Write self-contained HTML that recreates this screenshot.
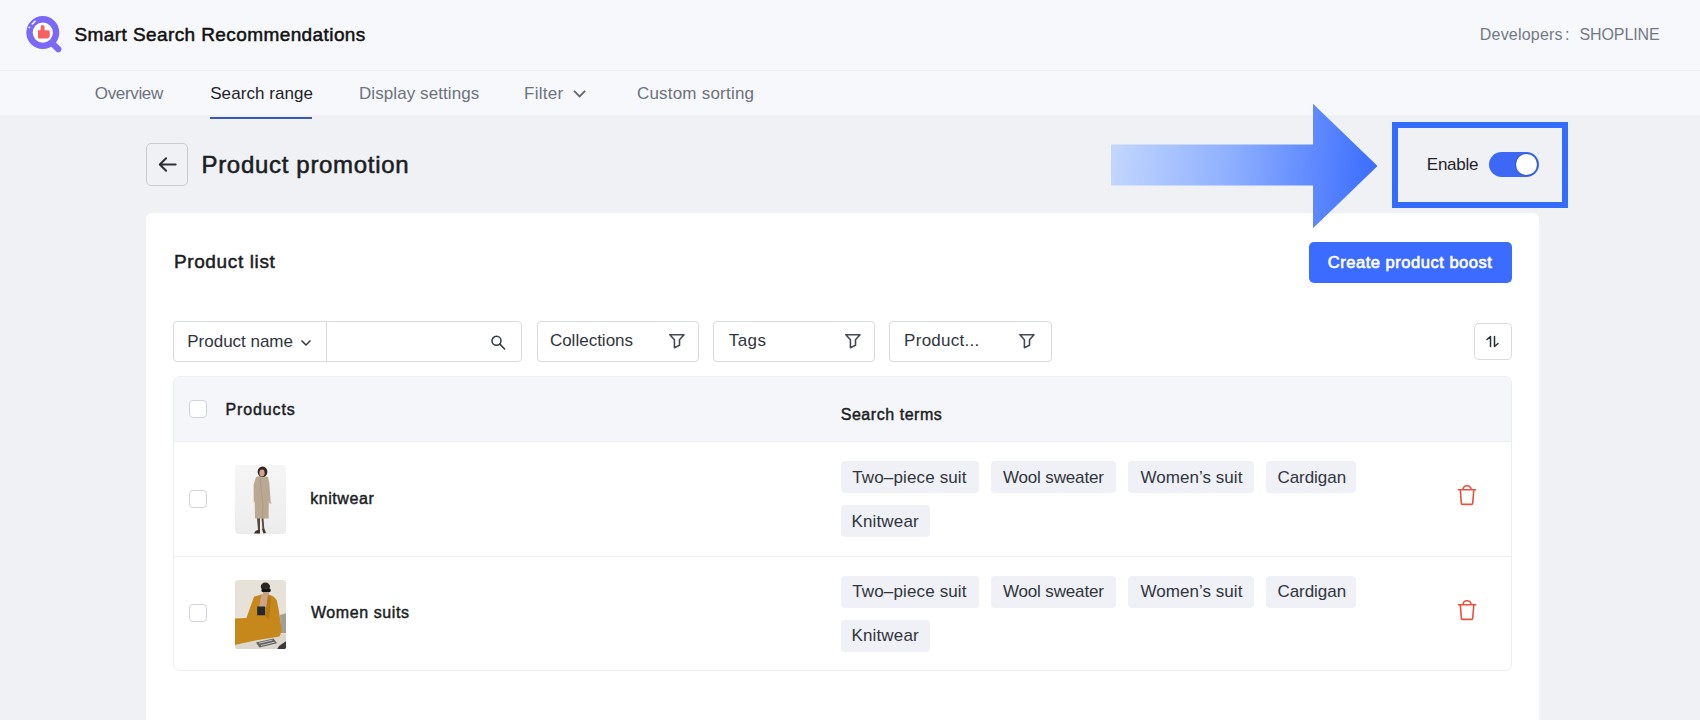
<!DOCTYPE html>
<html><head><meta charset="utf-8"><style>
html,body{margin:0;padding:0;width:1700px;height:720px;overflow:hidden;background:#f0f1f5;}
body{position:relative;font-family:"Liberation Sans",sans-serif;}
.t{position:absolute;line-height:1;white-space:nowrap;}
</style></head><body>
<div style="position:absolute;left:0;top:0;width:1700px;height:71px;background:#f7f8fb;border-bottom:1px solid #eeeef3;box-sizing:border-box"></div>
<div style="position:absolute;left:0;top:71px;width:1700px;height:44px;background:#f7f8fb"></div>
<svg style="position:absolute;left:0;top:0" width="70" height="60" viewBox="0 0 70 60">
<line x1="52" y1="43" x2="58.3" y2="49.3" stroke="#7a68f6" stroke-width="6.2" stroke-linecap="round"/>
<circle cx="42.8" cy="32.6" r="13.3" fill="#fff" stroke="#7a68f6" stroke-width="6.4"/>
<path d="M32.3 24 L35.1 21.2" stroke="#fff" stroke-width="1.5" stroke-linecap="round"/>
<circle cx="29.4" cy="27.4" r="0.9" fill="#fff"/>
<path d="M38 30.2 H40.6 V27.2 Q40.6 25.1 42.6 25.1 Q44.6 25.1 44.6 27.2 V30.2 H48.2 Q49.8 30.2 49.8 31.8 V35.6 Q49.8 38.4 47 38.4 H38 Z" fill="#f66262"/>
</svg>
<div class="t" id="title" style="top:25.00px;left:74.50px;font-size:19px;font-weight:400;color:#111;letter-spacing:0.407px;-webkit-text-stroke:0.5px #111;">Smart Search Recommendations</div>
<div class="t" id="dev1" style="top:27.00px;left:1479.80px;font-size:16px;font-weight:400;color:#737987;letter-spacing:0.200px;">Developers</div>
<div class="t" id="dev2" style="top:27.00px;left:1565.00px;font-size:16px;font-weight:400;color:#737987;letter-spacing:0.000px;">:</div>
<div class="t" id="dev3" style="top:27.00px;left:1579.40px;font-size:16px;font-weight:400;color:#737987;letter-spacing:-0.086px;">SHOPLINE</div>
<div class="t" id="nav1" style="top:85.00px;left:94.80px;font-size:17px;font-weight:400;color:#6c7280;letter-spacing:-0.343px;">Overview</div>
<div class="t" id="nav2" style="top:85.00px;left:210.20px;font-size:17px;font-weight:400;color:#1f2329;letter-spacing:0.073px;">Search range</div>
<div class="t" id="nav3" style="top:85.00px;left:359.00px;font-size:17px;font-weight:400;color:#6c7280;letter-spacing:0.080px;">Display settings</div>
<div class="t" id="nav4" style="top:85.00px;left:524.00px;font-size:17px;font-weight:400;color:#6c7280;letter-spacing:0.280px;">Filter</div>
<svg style="position:absolute;left:571px;top:87px" width="16" height="12" viewBox="0 0 16 12"><path d="M3.1 3.9 L8.6 9.4 L14.1 3.9" stroke="#636874" stroke-width="1.8" fill="none"/></svg>
<div class="t" id="nav5" style="top:85.00px;left:636.90px;font-size:17px;font-weight:400;color:#6c7280;letter-spacing:0.215px;">Custom sorting</div>
<div style="position:absolute;left:0;top:115px;width:1700px;height:605px;background:#f0f1f5"></div>
<div style="position:absolute;left:210px;top:117px;width:102px;height:2px;background:#3b57b8"></div>
<div style="position:absolute;left:146px;top:143px;width:42px;height:43px;box-sizing:border-box;border:1px solid #c8cbd2;border-radius:5px"></div>
<svg style="position:absolute;left:156px;top:154px" width="24" height="22" viewBox="0 0 24 22"><path d="M3.8 10.5 H19.6 M10.1 4.2 L3.8 10.5 L10.1 16.8" stroke="#2b2f36" stroke-width="2" fill="none" stroke-linecap="round" stroke-linejoin="round"/></svg>
<div class="t" id="pp" style="top:153.00px;left:201.50px;font-size:24px;font-weight:400;color:#1a1d23;letter-spacing:0.687px;-webkit-text-stroke:0.55px #1a1d23;">Product promotion</div>
<div style="position:absolute;left:146px;top:213px;width:1393px;height:520px;background:#fff;border-radius:6px"></div>
<svg style="position:absolute;left:1100px;top:95px" width="300" height="140" viewBox="0 0 300 140">
<defs><linearGradient id="ag" x1="10" y1="60" x2="278" y2="80" gradientUnits="userSpaceOnUse">
<stop offset="0" stop-color="#c3d7fd"/><stop offset="0.45" stop-color="#8eafff"/><stop offset="1" stop-color="#3a6cff"/></linearGradient></defs>
<path d="M11 49.6 H213 V8.8 L277.5 71 L213 133.2 V90.4 H11 Z" fill="url(#ag)"/>
</svg>
<div style="position:absolute;left:1392px;top:122px;width:176px;height:86px;box-sizing:border-box;border:6px solid #336dff"></div>
<div class="t" id="enable" style="top:156.00px;left:1426.80px;font-size:17px;font-weight:400;color:#1f2329;letter-spacing:-0.240px;">Enable</div>
<div style="position:absolute;left:1489px;top:152px;width:50px;height:25px;border-radius:13px;background:#3c68f5"></div>
<div style="position:absolute;left:1515.8px;top:153.9px;width:21.5px;height:21.5px;border-radius:50%;background:#fff;box-shadow:0 0 0 1px #3059d8"></div>
<div class="t" id="plist" style="top:252.00px;left:173.90px;font-size:19px;font-weight:400;color:#1a1d23;letter-spacing:0.636px;-webkit-text-stroke:0.5px #1a1d23;">Product list</div>
<div style="position:absolute;left:1309px;top:242px;width:203px;height:41px;border-radius:5px;background:#3c6cff"></div>
<div class="t" id="create" style="top:254.00px;left:1327.80px;font-size:16.5px;font-weight:400;color:#fff;letter-spacing:0.526px;-webkit-text-stroke:0.65px #fff;">Create product boost</div>
<div style="position:absolute;left:173px;top:321px;width:349px;height:41px;box-sizing:border-box;border:1px solid #d8dbe2;border-radius:4px"></div>
<div style="position:absolute;left:326px;top:322px;width:1px;height:39px;background:#d8dbe2"></div>
<div class="t" id="pname" style="top:333.00px;left:187.30px;font-size:17px;font-weight:400;color:#30353d;letter-spacing:-0.018px;">Product name</div>
<svg style="position:absolute;left:299px;top:337px" width="14" height="12" viewBox="0 0 14 12"><path d="M2.5 3.5 L7 8 L11.5 3.5" stroke="#2b2f36" stroke-width="1.4" fill="none"/></svg>
<svg style="position:absolute;left:488px;top:333px" width="20" height="20" viewBox="0 0 20 20"><circle cx="8.5" cy="7.8" r="4.5" stroke="#353a42" stroke-width="1.5" fill="none"/><path d="M11.8 11.1 L16.6 16" stroke="#353a42" stroke-width="1.6" stroke-linecap="round"/></svg>
<div style="position:absolute;left:536.5px;top:321px;width:162.0px;height:41px;box-sizing:border-box;border:1px solid #d8dbe2;border-radius:4px"></div>
<div class="t" id="coll" style="top:332.00px;left:549.90px;font-size:17px;font-weight:400;color:#30353d;letter-spacing:0.000px;">Collections</div>
<svg style="position:absolute;left:667.5px;top:332px" width="18" height="18" viewBox="0 0 18 18"><path d="M1.9 2.7 H16 L11.5 7.8 V13.3 L6.4 15.7 V7.8 Z" stroke="#444951" stroke-width="1.6" fill="none" stroke-linejoin="round"/></svg>
<div style="position:absolute;left:713px;top:321px;width:162px;height:41px;box-sizing:border-box;border:1px solid #d8dbe2;border-radius:4px"></div>
<div class="t" id="tags" style="top:332.00px;left:728.70px;font-size:17px;font-weight:400;color:#30353d;letter-spacing:0.467px;">Tags</div>
<svg style="position:absolute;left:843.5px;top:332px" width="18" height="18" viewBox="0 0 18 18"><path d="M1.9 2.7 H16 L11.5 7.8 V13.3 L6.4 15.7 V7.8 Z" stroke="#444951" stroke-width="1.6" fill="none" stroke-linejoin="round"/></svg>
<div style="position:absolute;left:889px;top:321px;width:162.5px;height:41px;box-sizing:border-box;border:1px solid #d8dbe2;border-radius:4px"></div>
<div class="t" id="prod" style="top:332.00px;left:904.10px;font-size:17px;font-weight:400;color:#30353d;letter-spacing:0.267px;">Product...</div>
<svg style="position:absolute;left:1018px;top:332px" width="18" height="18" viewBox="0 0 18 18"><path d="M1.9 2.7 H16 L11.5 7.8 V13.3 L6.4 15.7 V7.8 Z" stroke="#444951" stroke-width="1.6" fill="none" stroke-linejoin="round"/></svg>
<div style="position:absolute;left:1474px;top:323px;width:37.5px;height:36.5px;box-sizing:border-box;border:1px solid #d8dbe2;border-radius:5px"></div>
<svg style="position:absolute;left:1483px;top:332px" width="20" height="20" viewBox="0 0 20 20"><path d="M4 7.5 L7.5 4.5 V14.5 M11.5 4.5 V14.5 L15 11.5" stroke="#2b2f36" stroke-width="1.5" fill="none" stroke-linejoin="round" stroke-linecap="round"/></svg>
<div style="position:absolute;left:173px;top:376px;width:1338.5px;height:295px;box-sizing:border-box;border:1px solid #eceef3;border-radius:7px;overflow:hidden"><div style="position:absolute;left:0;top:0;width:100%;height:64px;background:#f5f6fa;border-bottom:1px solid #eceef3"></div><div style="position:absolute;left:0;top:179px;width:100%;height:1px;background:#eceef3"></div></div>
<div style="position:absolute;left:189px;top:399.5px;width:18px;height:18px;box-sizing:border-box;border:1.8px solid #cfd3de;border-radius:4px;background:#fff"></div>
<div class="t" id="thp" style="top:402.00px;left:225.60px;font-size:16px;font-weight:400;color:#1a1d23;letter-spacing:0.857px;-webkit-text-stroke:0.45px #1a1d23;">Products</div>
<div class="t" id="ths" style="top:407.00px;left:840.70px;font-size:16px;font-weight:400;color:#1a1d23;letter-spacing:0.545px;-webkit-text-stroke:0.45px #1a1d23;">Search terms</div>
<div style="position:absolute;left:189px;top:489.8px;width:18px;height:18px;box-sizing:border-box;border:1.8px solid #cfd3de;border-radius:4px;background:#fff"></div>
<svg style="position:absolute;left:234.5px;top:464.5px;border-radius:4px" width="51.5" height="69.5" viewBox="0 0 51.5 69.5">
<defs><linearGradient id="g1" x1="0" y1="0" x2="0" y2="1"><stop offset="0" stop-color="#f6f6f6"/><stop offset="1" stop-color="#ececec"/></linearGradient>
<clipPath id="c1"><rect width="51.5" height="69.5" rx="4"/></clipPath></defs>
<g clip-path="url(#c1)"><rect width="51.5" height="69.5" fill="url(#g1)"/>
<path d="M20.5 66 L19 68.5 L25 68.5 L25 64 Z M27 64 L28.5 68.5 L31 68 L29 63 Z" fill="#3d3028"/>
<path d="M22 53 L23 65 L25 65 L25 53 Z M26.5 53 L27.5 64.5 L29.3 64.5 L28.5 53 Z" fill="#5a463a"/>
<path d="M21 12 Q27 10 33 12 L34.3 18 L35.6 36 L36.5 38.5 L34.5 38.5 L33.8 35 L33.6 53.6 L20 53.6 L19.7 36 L18.8 38 L18.6 20 Z" fill="#bba893"/>
<path d="M25 14 L28 40 L27 53" stroke="#a8947f" stroke-width="0.8" fill="none"/>
<ellipse cx="27.5" cy="6.8" rx="4.9" ry="5.3" fill="#34261f"/>
<ellipse cx="27" cy="8" rx="2.6" ry="3.4" fill="#cfa68c"/>
</g></svg>
<div class="t" id="knit" style="top:491.00px;left:310.20px;font-size:16px;font-weight:400;color:#1a1d23;letter-spacing:0.571px;-webkit-text-stroke:0.45px #1a1d23;">knitwear</div>
<div style="position:absolute;left:841px;top:461px;width:137.5px;height:32px;background:#eff1f6;border-radius:4px"></div>
<div class="t" id="tag10" style="top:469.00px;left:852.25px;font-size:17px;font-weight:400;color:#30353d;letter-spacing:0.138px;">Two–piece suit</div>
<div style="position:absolute;left:990.6px;top:461px;width:125.39999999999998px;height:32px;background:#eff1f6;border-radius:4px"></div>
<div class="t" id="tag11" style="top:469.00px;left:1002.90px;font-size:17px;font-weight:400;color:#30353d;letter-spacing:-0.145px;">Wool sweater</div>
<div style="position:absolute;left:1128.2px;top:461px;width:125.59999999999991px;height:32px;background:#eff1f6;border-radius:4px"></div>
<div class="t" id="tag12" style="top:469.00px;left:1140.40px;font-size:17px;font-weight:400;color:#30353d;letter-spacing:0.055px;">Women’s suit</div>
<div style="position:absolute;left:1266.1px;top:461px;width:90.40000000000009px;height:32px;background:#eff1f6;border-radius:4px"></div>
<div class="t" id="tag13" style="top:469.00px;left:1277.40px;font-size:17px;font-weight:400;color:#30353d;letter-spacing:-0.029px;">Cardigan</div>
<div style="position:absolute;left:841px;top:505px;width:89px;height:32px;background:#eff1f6;border-radius:4px"></div>
<div class="t" id="tag14" style="top:513.00px;left:851.50px;font-size:17px;font-weight:400;color:#30353d;letter-spacing:0.143px;">Knitwear</div>
<svg style="position:absolute;left:1454.5px;top:483.5px" width="24" height="26" viewBox="0 0 24 26"><path d="M2.8 5.7 H21.2 M8 5.7 Q8.2 1.7 12 1.7 Q15.8 1.7 16.2 5.7 M5.3 5.7 L6.4 19.4 Q6.5 20.4 7.5 20.4 H16.6 Q17.6 20.4 17.7 19.4 L18.8 5.7" stroke="#e5533d" stroke-width="1.6" fill="none" stroke-linejoin="round"/></svg>
<div style="position:absolute;left:189px;top:604.2px;width:18px;height:18px;box-sizing:border-box;border:1.8px solid #cfd3de;border-radius:4px;background:#fff"></div>
<svg style="position:absolute;left:234.5px;top:579.5px" width="51.5" height="69.5" viewBox="0 0 51.5 69.5">
<defs><clipPath id="c2"><rect width="51.5" height="69.5" rx="4"/></clipPath></defs>
<g clip-path="url(#c2)"><rect width="51.5" height="69.5" fill="#e6e2da"/>
<rect x="0" y="54" width="51.5" height="15.5" fill="#ddd7ce"/>
<path d="M45 35 L51.5 33 L51.5 53 L46 53 Z" fill="#a29d95"/>
<path d="M44 66 L51.5 61 L51.5 69.5 L42 69.5 Z" fill="#3a3a3a"/>
<path d="M0 38.5 L11.4 38 L19 16.8 L26.5 14.5 L34 14.5 L38.5 16.5 L41.7 20 L43.8 30 L46.8 51 L44.5 56.5 L20 60.5 L6 63.5 L0 65 Z" fill="#c6871b"/>
<path d="M26.5 14.5 L34 14.5 L31.5 27 L24 27 Z" fill="#caa58b"/>
<path d="M30 36 L33 15 L36 17 L34 40 Z" fill="#b57812"/>
<rect x="22.2" y="26.5" width="7.8" height="8.8" fill="#23272f"/>
<ellipse cx="30.4" cy="6.6" rx="4.6" ry="4" fill="#2b2521"/>
<ellipse cx="31" cy="12" rx="3.3" ry="3.4" fill="#c89f85"/>
<rect x="26.5" y="8.6" width="9.2" height="3.4" rx="1.3" fill="#141414"/>
<path d="M21 62.5 L38.5 58.5 L42 63.2 L24.5 67.5 Z" fill="#626262"/>
<path d="M24 63.2 L37.5 60 M26 65.5 L39.5 62.2" stroke="#cfcfcf" stroke-width="0.9"/>
</g></svg>
<div class="t" id="wsuit" style="top:605.00px;left:310.90px;font-size:16px;font-weight:400;color:#1a1d23;letter-spacing:0.600px;-webkit-text-stroke:0.45px #1a1d23;">Women suits</div>
<div style="position:absolute;left:841px;top:575.75px;width:137.5px;height:32px;background:#eff1f6;border-radius:4px"></div>
<div class="t" id="tag20" style="top:583.00px;left:852.25px;font-size:17px;font-weight:400;color:#30353d;letter-spacing:0.138px;">Two–piece suit</div>
<div style="position:absolute;left:990.6px;top:575.75px;width:125.39999999999998px;height:32px;background:#eff1f6;border-radius:4px"></div>
<div class="t" id="tag21" style="top:583.00px;left:1002.90px;font-size:17px;font-weight:400;color:#30353d;letter-spacing:-0.145px;">Wool sweater</div>
<div style="position:absolute;left:1128.2px;top:575.75px;width:125.59999999999991px;height:32px;background:#eff1f6;border-radius:4px"></div>
<div class="t" id="tag22" style="top:583.00px;left:1140.40px;font-size:17px;font-weight:400;color:#30353d;letter-spacing:0.055px;">Women’s suit</div>
<div style="position:absolute;left:1266.1px;top:575.75px;width:90.40000000000009px;height:32px;background:#eff1f6;border-radius:4px"></div>
<div class="t" id="tag23" style="top:583.00px;left:1277.40px;font-size:17px;font-weight:400;color:#30353d;letter-spacing:-0.029px;">Cardigan</div>
<div style="position:absolute;left:841px;top:619.75px;width:89px;height:32px;background:#eff1f6;border-radius:4px"></div>
<div class="t" id="tag24" style="top:627.00px;left:851.50px;font-size:17px;font-weight:400;color:#30353d;letter-spacing:0.143px;">Knitwear</div>
<svg style="position:absolute;left:1454.5px;top:598.5px" width="24" height="26" viewBox="0 0 24 26"><path d="M2.8 5.7 H21.2 M8 5.7 Q8.2 1.7 12 1.7 Q15.8 1.7 16.2 5.7 M5.3 5.7 L6.4 19.4 Q6.5 20.4 7.5 20.4 H16.6 Q17.6 20.4 17.7 19.4 L18.8 5.7" stroke="#e5533d" stroke-width="1.6" fill="none" stroke-linejoin="round"/></svg>
</body></html>
